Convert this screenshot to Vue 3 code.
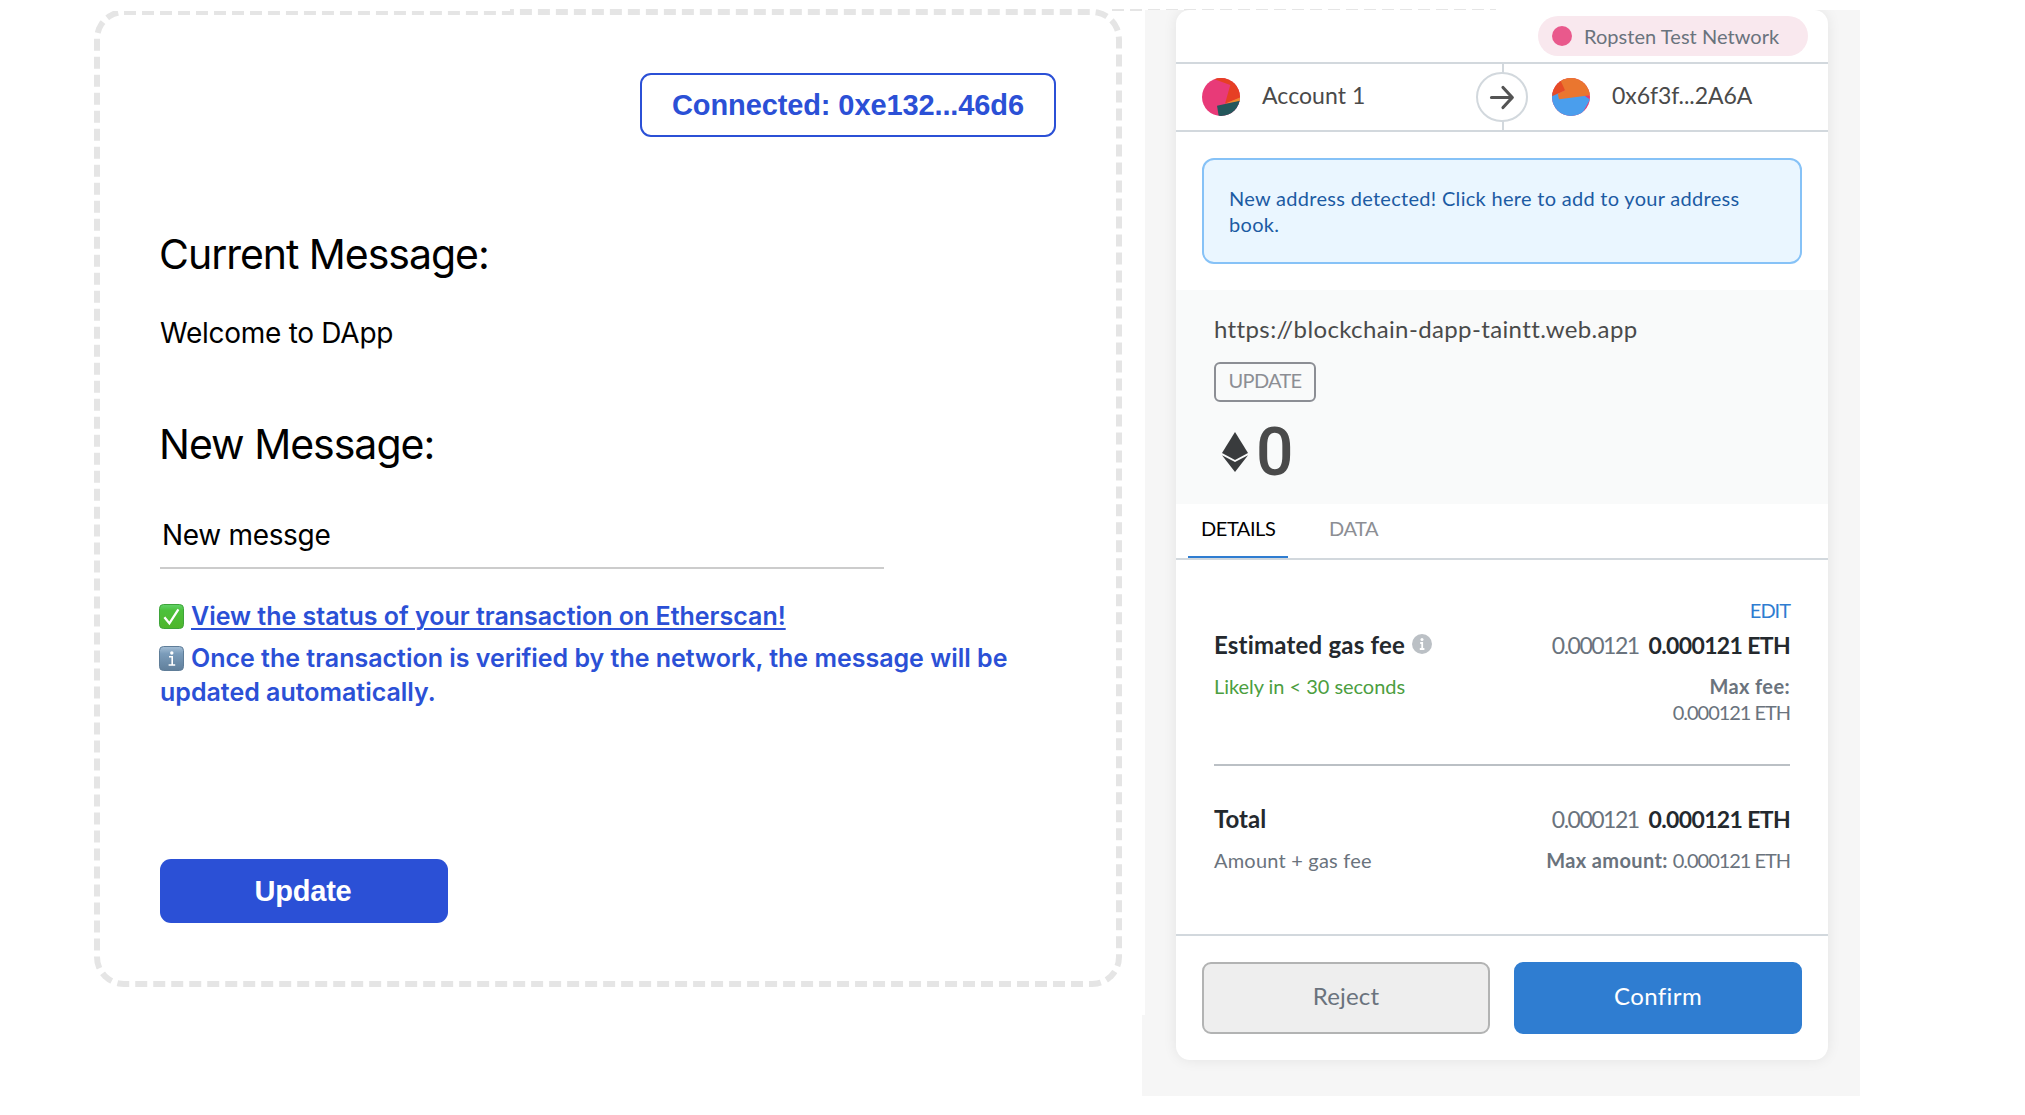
<script setup>
import { ref } from 'vue'

const message = ref('Welcome to DApp')
const draft = ref('New messge')
const fee = '0.000121'
</script>

<template>
  <div class="page">
    <div class="dash-strip"></div>
    <main class="dapp">
      <button class="wallet">Connected: 0xe132...46d6</button>
      <h2 class="h-current">Current Message:</h2>
      <p class="message">{{ message }}</p>
      <h2 class="h-new">New Message:</h2>
      <input v-model="draft" class="field" type="text" />
      <div class="status">
        <p>
          <svg class="emoji" viewBox="0 0 25 25">
            <defs>
              <linearGradient id="green" x1="0" y1="0" x2="0" y2="1">
                <stop offset="0" stop-color="#62d36a" />
                <stop offset=".25" stop-color="#4cc13c" />
                <stop offset="1" stop-color="#4fb52c" />
              </linearGradient>
            </defs>
            <rect x=".5" y=".5" width="24" height="24" rx="4" fill="url(#green)" stroke="#3fa43a" />
            <path d="M5.4 13.2 10.4 19.4 19.4 5.4" fill="none" stroke="#fff" stroke-width="2.3" />
          </svg>
          <a class="link">View the status of your transaction on Etherscan!</a>
        </p>
        <p>
          <svg class="emoji" viewBox="0 0 25 25">
            <defs>
              <linearGradient id="slate" x1="0" y1="0" x2="0" y2="1">
                <stop offset="0" stop-color="#a5bfd6" />
                <stop offset=".3" stop-color="#7b9cba" />
                <stop offset="1" stop-color="#607f9b" />
              </linearGradient>
            </defs>
            <rect x=".5" y=".5" width="24" height="24" rx="4" fill="url(#slate)" stroke="#5f7d98" />
            <circle cx="12.8" cy="7" r="1.7" fill="#fff" />
            <path d="M10 10.8h3.2v8M9.6 19h6.6" fill="none" stroke="#fff" stroke-width="1.6" />
          </svg><span>Once the transaction is verified by the network, the message will be</span><br /><span class="tail">updated automatically.</span>
        </p>
      </div>
      <button class="update">Update</button>
    </main>

    <aside class="wallet-pane">
      <section class="card">
        <header class="network-bar">
          <div class="network"><i></i><span>Ropsten Test Network</span></div>
        </header>

        <div class="parties">
          <div class="party">
            <svg class="avatar" viewBox="0 0 38 38">
              <clipPath id="c1"><circle cx="19" cy="19" r="19" /></clipPath>
              <g clip-path="url(#c1)">
                <rect width="38" height="38" fill="#e83a78" />
                <path d="M9 0 28.3 7 23 25.7 38 19.7V0z" fill="#e63f24" />
                <path d="M23 25.8 38 19.5V23.5z" fill="#ee8b2b" />
                <path d="M15 27.7 38 22.7V38H16.7z" fill="#24575c" />
              </g>
            </svg>
            <span class="acct">Account 1</span>
          </div>
          <div class="arrow">
            <svg viewBox="0 0 52 50">
              <rect x="1" y="1" width="50" height="48" rx="24.5" fill="#fff" stroke="#d2d8dd" stroke-width="2" />
              <path d="M15.5 25.5H36M27 15.5l9.3 10L27 35.5" fill="none" stroke="#545454" stroke-width="3.2" stroke-linecap="round" stroke-linejoin="round" />
            </svg>
          </div>
          <div class="party to">
            <svg class="avatar" viewBox="0 0 38 38">
              <clipPath id="c2"><circle cx="19" cy="19" r="19" /></clipPath>
              <g clip-path="url(#c2)">
                <rect width="38" height="38" fill="#e9386f" />
                <path d="M0 15H33V18L38 21.5 30.7 34.7 28 38H0z" fill="#4a9eed" />
                <path d="M0 0H12L13 12.3 5 16 0 18.3z" fill="#e64b26" />
                <path d="M8.3 2 13 12.3 5.7 15.7 7 21.3 38 17.3V0H8z" fill="#ea762f" />
              </g>
            </svg>
            <span class="addr">0x6f3f...2A6A</span>
          </div>
        </div>

        <div class="notice">
          <p>New address detected! Click here to add to your address book.</p>
        </div>

        <div class="summary">
          <p class="origin">https://blockchain-dapp-taintt.web.app</p>
          <span class="action">UPDATE</span>
          <div class="amount">
            <svg viewBox="0 0 26 40">
              <path d="M13 0 26 21 13 28 0 21z" fill="#393b3d" />
              <path d="M0 23.2 13 30 26 23.2 13 40z" fill="#393b3d" />
            </svg>
            <strong>0</strong>
          </div>
        </div>

        <nav class="tabs">
          <span class="tab active">DETAILS</span>
          <span class="tab">DATA</span>
        </nav>

        <div class="details">
          <div class="edit">EDIT</div>
          <div class="row big">
            <span class="label est">Estimated gas fee
              <svg viewBox="0 0 20 20">
                <circle cx="10" cy="10" r="10" fill="#bbc0c5" />
                <circle cx="10" cy="5.4" r="1.5" fill="#fff" />
                <path d="M8.2 9h2v5.6M7.8 15h4.6" fill="none" stroke="#fff" stroke-width="1.8" />
              </svg>
            </span>
            <span class="values"><span class="thin">{{ fee }}</span><b>{{ fee }} ETH</b></span>
          </div>
          <div class="row small">
            <span class="likely">Likely in &lt; 30 seconds</span>
            <span class="max"><b>Max fee:</b><br /><span class="num">{{ fee }} ETH</span></span>
          </div>
          <hr />
          <div class="row big">
            <span class="label total">Total</span>
            <span class="values"><span class="thin">{{ fee }}</span><b>{{ fee }} ETH</b></span>
          </div>
          <div class="row small">
            <span class="note">Amount + gas fee</span>
            <span class="max"><b>Max amount:</b><span class="num gap">{{ fee }} ETH</span></span>
          </div>
        </div>

        <footer class="actions">
          <button class="reject">Reject</button>
          <button class="confirm">Confirm</button>
        </footer>
      </section>
    </aside>
  </div>
</template>

<style>
body { margin: 0; background: #fff; }
</style>

<style scoped>
* { box-sizing: border-box; }
p, h2 { margin: 0; }
h2 { font-weight: 400; }
button { font: inherit; margin: 0; padding: 0; }
svg { display: block; flex: none; }

.page {
  position: relative;
  display: flex;
  align-items: flex-start;
  width: 2025px;
  height: 1115px;
  padding-top: 9px;
  overflow: hidden;
  background: #fff;
}

/* thin remainder of the dashed outline running along the top edge */
.dash-strip {
  position: absolute;
  top: 9px;
  left: 1112px;
  width: 384px;
  height: 2px;
  background: repeating-linear-gradient(90deg, #e5e5e5 0 12px, transparent 12px 18px);
}

.dapp {
  position: relative;
  display: flex;
  flex-direction: column;
  align-items: flex-start;
  width: 1028px;
  height: 978px;
  margin-left: 94px;
  padding: 58px 60px 0;
  border: 6px dashed #e5e5e5;
  border-radius: 30px;
  font-family: Inter, sans-serif;
  color: #000;
}
.dapp::before {
  content: '';
  position: absolute;
  top: -6px;
  left: -6px;
  width: 416px;
  height: 2px;
  background: #fff;
}
.wallet {
  align-self: flex-end;
  width: 416px;
  height: 64px;
  border: 2px solid #2b50d6;
  border-radius: 11px;
  background: #fff;
  color: #2b50d6;
  font: 700 29px/60px "Liberation Sans", sans-serif;
  letter-spacing: -0.11px;
  white-space: nowrap;
}
h2 { font-size: 41px; line-height: 50px; white-space: nowrap; }
.h-current { margin-top: 92px; margin-left: -1px; letter-spacing: -1.03px; }
.message { margin-top: 37px; font-size: 28px; line-height: 34px; letter-spacing: -0.27px; }
.h-new { margin-top: 69px; margin-left: -1px; letter-spacing: -1px; }
.field {
  width: 724px;
  height: 51px;
  margin: 49px 0 0;
  padding: 0 2px 15px;
  border: 0 solid transparent;
  border-bottom: 2px solid #ccc;
  outline: none;
  background: none;
  color: #000;
  font: 28px/34px Inter, sans-serif;
  letter-spacing: -0.32px;
}
.status {
  display: flex;
  flex-direction: column;
  gap: 8px;
  margin-top: 30px;
  color: #2b50d6;
  font-size: 25px;
  font-weight: 600;
  line-height: 34px;
  letter-spacing: -0.01px;
  white-space: nowrap;
}
.emoji { display: inline-block; width: 25px; height: 25px; margin: 0 7px 0 -1px; vertical-align: -4px; }
.link { text-decoration: underline; text-decoration-thickness: 2px; text-underline-offset: 3px; }
.update {
  width: 288px;
  height: 64px;
  margin-top: 150px;
  padding-right: 2px;
  border: 0;
  border-radius: 11px;
  background: #2b50d6;
  color: #fff;
  font: 700 29px/64px "Liberation Sans", sans-serif;
  letter-spacing: -0.23px;
}

.wallet-pane {
  position: relative;
  width: 715px;
  height: 1086px;
  margin: 1px 0 0 23px;
  padding-left: 31px;
  background: #f6f6f6;
  font-family: Lato, sans-serif;
}
.wallet-pane::before {
  content: '';
  position: absolute;
  left: -3px;
  bottom: 0;
  width: 3px;
  height: 81px;
  background: #f6f6f6;
}
.card {
  width: 652px;
  height: 1050px;
  border-radius: 14px;
  background: #fff;
  box-shadow: 0 0 14px rgba(0, 0, 0, 0.08);
  clip-path: inset(0 -24px -24px -24px);
}
.network-bar {
  display: flex;
  justify-content: flex-end;
  height: 54px;
  padding: 6px 20px 0 0;
  border-bottom: 2px solid #d2d8dd;
}
.network {
  display: flex;
  align-items: center;
  width: 270px;
  height: 40px;
  padding-left: 14px;
  border-radius: 20px;
  background: #f9e8ee;
  color: #6a737d;
  font-size: 20px;
  line-height: 26px;
  letter-spacing: 0.05px;
}
.network i { width: 20px; height: 20px; margin-right: 12px; border-radius: 50%; background: #e9598c; }
.parties {
  display: flex;
  height: 68px;
  border-bottom: 2px solid #d2d8dd;
  color: #4a4a4a;
  font-size: 23px;
  line-height: 30px;
}
.party { display: flex; width: 300px; padding: 14px 0 0 26px; }
.avatar { width: 38px; height: 38px; margin-right: 22px; }
.party span { padding-top: 2px; }
.acct { letter-spacing: 0.06px; }
.addr { letter-spacing: -0.08px; }
.party.to { padding-left: 24px; }
.arrow {
  width: 52px;
  height: 66px;
  padding-top: 8px;
  background: linear-gradient(#d2d8dd, #d2d8dd) 26px 0 / 2px 100% no-repeat;
}
.arrow svg { width: 52px; height: 50px; }
.notice {
  height: 106px;
  margin: 26px;
  padding: 25px 20px 0 25px;
  border: 2px solid #86c2f7;
  border-radius: 12px;
  background: #eaf6ff;
  color: #1c5ba3;
  font-size: 20px;
  line-height: 26px;
  letter-spacing: 0.3px;
}
.summary {
  display: flex;
  flex-direction: column;
  align-items: flex-start;
  height: 214px;
  padding: 25px 38px 0;
  background: #f9fafa;
}
.origin { color: #4a4a4a; font-size: 24px; line-height: 28px; letter-spacing: 0.37px; }
.action {
  width: 102px;
  height: 40px;
  margin-top: 19px;
  border: 2px solid #8c8e94;
  border-radius: 6px;
  color: #8c8e94;
  font-size: 20px;
  line-height: 33px;
  letter-spacing: -0.7px;
  text-align: center;
}
.amount { display: flex; margin-top: 17px; }
.amount svg { width: 26px; height: 40px; margin: 13px 8px 0; }
.amount strong { padding-top: 1px; color: #4a4a4a; font: 500 66px/66px Roboto, sans-serif; }
.tabs {
  display: flex;
  height: 56px;
  padding-left: 12px;
  border-bottom: 2px solid #d2d8dd;
  font-size: 20px;
  line-height: 26px;
}
.tab { height: 54px; margin-right: 27px; padding: 11px 13px 0 14px; color: #8c8e94; letter-spacing: -0.44px; }
.tab.active { width: 100px; padding: 11px 0 0 13px; border-bottom: 2px solid #2f7dd1; color: #000; }

.details { height: 374px; padding: 37px 38px 0; }
.edit { height: 26px; color: #2f7dd1; font-size: 20px; line-height: 26px; letter-spacing: -1px; text-align: right; }
.row { display: flex; justify-content: space-between; white-space: nowrap; }
.big { margin-top: 7px; color: #24292e; font-size: 23px; line-height: 30px; }
.label { display: flex; font-size: 24px; font-weight: 700; }
.label svg { width: 20px; height: 20px; margin: 4px 0 0 7px; }
.est { letter-spacing: 0.2px; }
.total { letter-spacing: 0; }
.thin { margin-right: 10px; color: #6a737d; letter-spacing: -1.5px; }
.values b { letter-spacing: -0.65px; }
.small { margin-top: 13px; color: #6a737d; font-size: 20px; line-height: 26px; }
.likely { color: #4c9e3f; letter-spacing: -0.04px; }
.max { text-align: right; }
.max b { letter-spacing: 0.37px; }
.num { letter-spacing: -1.04px; }
.gap { margin-left: 5px; }
.note { letter-spacing: 0.21px; }
hr { height: 2px; margin: 39px 0 38px; border: 0; background: #bbc0c5; }
hr + .big { margin-top: 0; }

.actions { display: flex; gap: 24px; height: 126px; padding: 26px; border-top: 2px solid #d2d8dd; }
.actions button { width: 288px; height: 72px; border-radius: 9px; font-size: 24px; line-height: 64px; padding-bottom: 5px; }
.reject { border: 2px solid #b2b3b3; background: #eee; color: #6a737d; letter-spacing: 0.2px; }
.confirm { border: 2px solid #2f7dd1; background: #2f7dd1; color: #fff; letter-spacing: 0.4px; }
</style>
